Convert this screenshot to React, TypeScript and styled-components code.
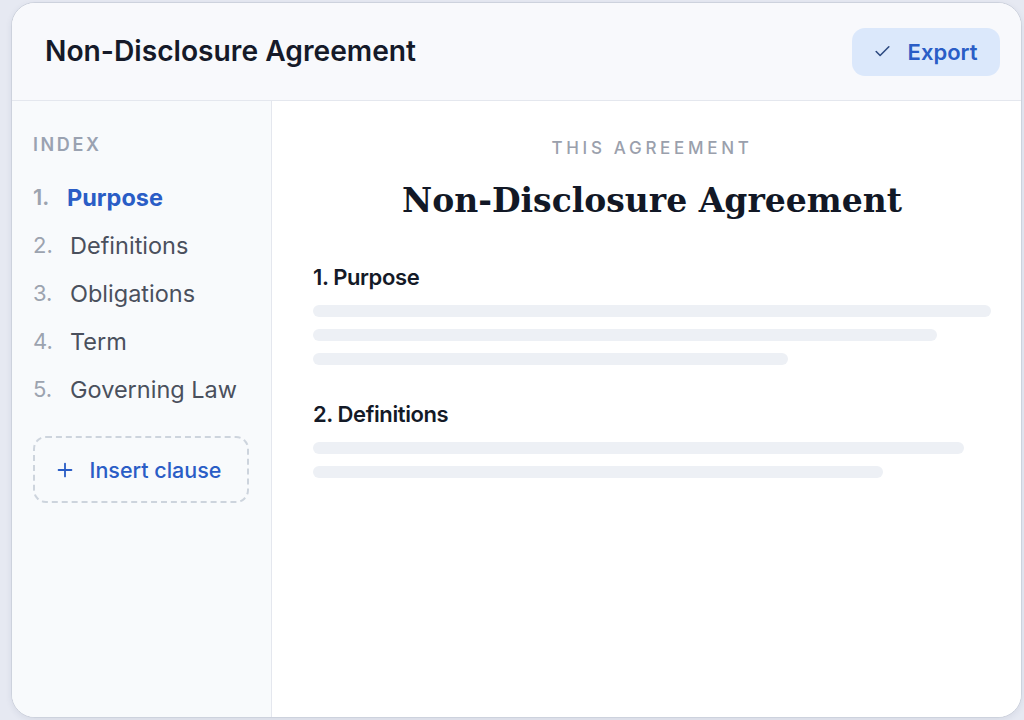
import React from 'react';
import styled, { createGlobalStyle } from 'styled-components';
import { Check, Plus } from 'lucide-react';

const GlobalStyle = createGlobalStyle`
  html, body {
    margin: 0;
    padding: 0;
    background: #e6e9f2;
    font-family: Inter, 'Noto Sans', sans-serif;
    overflow: hidden;
  }
`;

const Page = styled.div`
  width: 1024px;
  height: 720px;
  padding: 2px 0 0 11px;
  box-sizing: border-box;
`;

const Card = styled.div`
  width: 1011px;
  height: 716px;
  box-sizing: border-box;
  border: 1px solid #cdd2dd;
  border-radius: 24px;
  background: #ffffff;
  overflow: hidden;
  display: flex;
  flex-direction: column;
  box-shadow: 0 2px 6px rgba(40, 50, 90, 0.08);
`;

const Header = styled.header`
  height: 98px;
  flex: none;
  box-sizing: border-box;
  display: flex;
  align-items: center;
  justify-content: space-between;
  padding: 0 21px 0 33px;
  background: #f8f9fc;
  border-bottom: 1px solid #e4e7ee;
`;

const Title = styled.h1`
  margin: 0 0 2px;
  font-size: 28.2px;
  font-weight: 600;
  color: #151a29;
  letter-spacing: 0;
`;

const ExportButton = styled.button`
  height: 48px;
  width: 148px;
  border: none;
  border-radius: 13px;
  background: #dbe8fb;
  color: #2a5dc6;
  font-family: inherit;
  font-size: 22px;
  font-weight: 600;
  display: flex;
  align-items: center;
  justify-content: center;
  gap: 16px;
  padding: 0 2px 0 0;
  svg {
    color: #2d4a80;
  }
`;

const Body = styled.div`
  flex: 1;
  display: flex;
  min-height: 0;
`;

const Sidebar = styled.aside`
  width: 260px;
  flex: none;
  box-sizing: border-box;
  background: #f8fafc;
  border-right: 1px solid #e4e7ee;
  padding: 32px 21px 0 21px;
  display: flex;
  flex-direction: column;
`;

const IndexLabel = styled.div`
  font-size: 18px;
  font-weight: 600;
  letter-spacing: 2.6px;
  color: #9aa2b1;
  height: 24px;
  line-height: 24px;
  margin-bottom: 16px;
`;

const IndexList = styled.ol`
  list-style: none;
  margin: 0;
  padding: 0;
`;

const IndexItem = styled.li<{ $active?: boolean }>`
  height: 48px;
  display: flex;
  align-items: center;
  font-size: 23.5px;
  font-weight: ${(p) => (p.$active ? 700 : 400)};
  color: ${(p) => (p.$active ? '#2a5dc6' : '#4a505d')};
`;

const IndexNum = styled.span<{ $active?: boolean }>`
  width: ${(p) => (p.$active ? '34px' : '37px')};
  flex: none;
  color: #9ca3af;
  font-size: 22px;
  font-weight: ${(p) => (p.$active ? 600 : 400)};
`;

const InsertButton = styled.button`
  margin-top: 23px;
  width: 216px;
  height: 67px;
  box-sizing: border-box;
  border: 2px dashed #cdd4dd;
  border-radius: 13px;
  background: transparent;
  color: #2a5dc6;
  font-family: inherit;
  font-size: 21.5px;
  font-weight: 500;
  display: flex;
  align-items: center;
  justify-content: center;
  gap: 14px;
  padding: 0 7px 0 0;
`;

const Main = styled.main`
  flex: 1;
  box-sizing: border-box;
  padding: 35px 30px 0 41px;
  background: #ffffff;
`;

const Eyebrow = styled.div`
  text-align: center;
  font-size: 17px;
  font-weight: 500;
  letter-spacing: 3.7px;
  color: #9aa0ac;
  height: 24px;
  line-height: 24px;
`;

const DocTitle = styled.h2`
  margin: 19px 0 0;
  text-align: center;
  font-family: 'DejaVu Serif', 'Liberation Serif', serif;
  font-size: 33px;
  font-weight: 700;
  color: #121826;
  line-height: 44px;
  letter-spacing: 0;
`;

const Section = styled.section<{ $first?: boolean }>`
  margin-top: ${(p) => (p.$first ? '42px' : '37px')};
`;

const SectionHeading = styled.h3`
  margin: 0 0 16px;
  font-size: 22px;
  font-weight: 600;
  color: #141a27;
  line-height: 24px;
  letter-spacing: -0.4px;
`;

const LineStack = styled.div`
  display: flex;
  flex-direction: column;
  gap: 12px;
`;

const Line = styled.div`
  height: 12px;
  border-radius: 6px;
  background: #edf0f5;
`;

const clauses = ['Purpose', 'Definitions', 'Obligations', 'Term', 'Governing Law'];

const sections = [
  { title: '1. Purpose', lines: [100, 92, 70] },
  { title: '2. Definitions', lines: [96, 84] },
];

const App: React.FC = () => {
  return (
    <>
      <GlobalStyle />
      <Page>
        <Card>
          <Header>
            <Title>Non-Disclosure Agreement</Title>
            <ExportButton>
              <Check size={19} strokeWidth={2} />
              Export
            </ExportButton>
          </Header>
          <Body>
            <Sidebar>
              <IndexLabel>INDEX</IndexLabel>
              <IndexList>
                {clauses.map((c, i) => (
                  <IndexItem key={c} $active={i === 0}>
                    <IndexNum $active={i === 0}>{i + 1}.</IndexNum>
                    {c}
                  </IndexItem>
                ))}
              </IndexList>
              <InsertButton>
                <Plus size={22} strokeWidth={2} />
                Insert clause
              </InsertButton>
            </Sidebar>
            <Main>
              <Eyebrow>THIS AGREEMENT</Eyebrow>
              <DocTitle>Non-Disclosure Agreement</DocTitle>
              {sections.map((s, i) => (
                <Section key={s.title} $first={i === 0}>
                  <SectionHeading>{s.title}</SectionHeading>
                  <LineStack>
                    {s.lines.map((w, j) => (
                      <Line key={j} style={{ width: `${w}%` }} />
                    ))}
                  </LineStack>
                </Section>
              ))}
            </Main>
          </Body>
        </Card>
      </Page>
    </>
  );
};

export default App;
